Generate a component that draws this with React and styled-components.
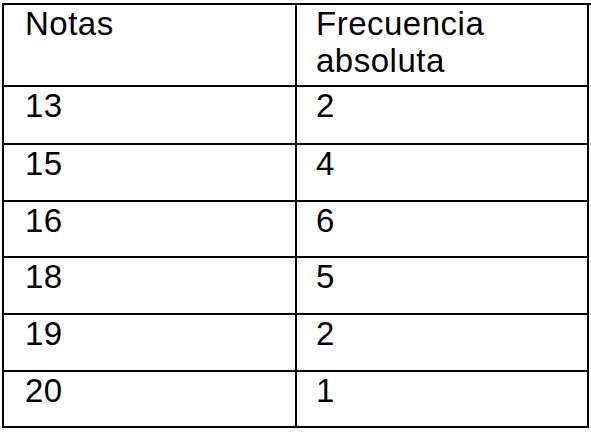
import { Fragment } from "react";
import styled, { createGlobalStyle } from "styled-components";

const GlobalStyle = createGlobalStyle`
  body {
    margin: 0;
    background: #ffffff;
    font-family: "Liberation Sans", Arial, sans-serif;
  }
`;

const rows = [
  ["13", "2"],
  ["15", "4"],
  ["16", "6"],
  ["18", "5"],
  ["19", "2"],
  ["20", "1"],
];

const Page = styled.div`
  padding: 3px 0 0 2px;
`;

const Table = styled.div`
  display: grid;
  grid-template-columns: 293px 292px;
  grid-template-rows: 82px 58px 57px 56px 57px 57px 56px;
  width: 587px;
  border-left: 2px solid #000;
  border-top: 2px solid #000;
`;

const Cell = styled.div`
  border-right: 2px solid #000;
  border-bottom: 2px solid #000;
  padding-left: ${(p) => (p.$second ? "19px" : "21px")};
  font-size: 33px;
  line-height: 37px;
  letter-spacing: 0.5px;
  color: #000;
`;

export default function App() {
  return (
    <>
      <GlobalStyle />
      <Page>
        <Table>
          <Cell>Notas</Cell>
          <Cell $second>
            Frecuencia
            <br />
            absoluta
          </Cell>
          {rows.map(([nota, freq], i) => (
            <Fragment key={i}>
              <Cell>{nota}</Cell>
              <Cell $second>{freq}</Cell>
            </Fragment>
          ))}
        </Table>
      </Page>
    </>
  );
}
